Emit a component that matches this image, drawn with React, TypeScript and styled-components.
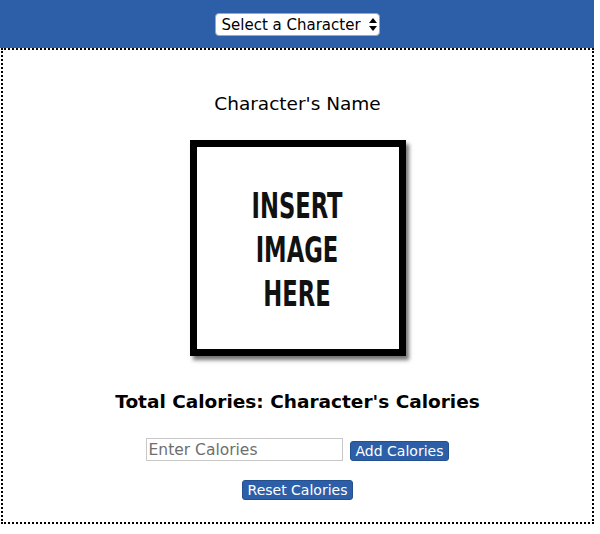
import React from "react";
import styled, { createGlobalStyle } from "styled-components";

const Global = createGlobalStyle`
  html, body { margin: 0; padding: 0; background: #fff; }
  body { font-family: "DejaVu Sans", Verdana, sans-serif; }
`;

const Page = styled.div`
  width: 594px;
`;

const Header = styled.header`
  height: 48px;
  background: #2d5fa9;
  display: flex;
  align-items: center;
  justify-content: center;
`;

const SelectWrap = styled.div`
  position: relative;
  margin-top: 1px;
`;

const Select = styled.select`
  appearance: none;
  -webkit-appearance: none;
  display: block;
  width: 165px;
  height: 23px;
  font-family: "DejaVu Sans", Verdana, sans-serif;
  font-size: 15px;
  color: #000;
  background: #fff;
  border: 1px solid #9aa7bd;
  border-radius: 4px;
  padding: 0 14px 0 6px;
`;

const Arrows = styled.svg`
  position: absolute;
  right: 3px;
  top: 5px;
  pointer-events: none;
`;

const Panel = styled.main`
  margin-left: 1px;
  border: 2px dotted #000;
  height: 472px;
  display: flex;
  flex-direction: column;
  align-items: center;
`;

const Name = styled.h2`
  margin: 42px 0 0;
  font-size: 18.5px;
  font-weight: normal;
  line-height: 24px;
`;

const Frame = styled.div`
  margin-top: 24px;
  width: 202px;
  height: 202px;
  border: 7px solid #000;
  background: #fff;
  box-shadow: 3px 4px 4px rgba(0, 0, 0, 0.55);
  display: flex;
  align-items: center;
  justify-content: center;
`;

const Placeholder = styled.div`
  font-family: "DejaVu Sans Condensed", "DejaVu Sans", sans-serif;
  font-stretch: condensed;
  font-weight: bold;
  font-size: 36px;
  line-height: 44px;
  text-align: center;
  transform: scaleX(0.7);
  margin-top: 4px;
  color: #111;
`;

const Total = styled.h3`
  margin: 34px 0 0;
  font-size: 18.5px;
  font-weight: bold;
  line-height: 24px;
`;

const Row = styled.div`
  margin-top: 24px;
  display: flex;
  align-items: center;
  gap: 7px;
`;

const Input = styled.input`
  width: 191px;
  height: 21px;
  padding: 0 2px;
  border: 1px solid #c8c8c8;
  font-family: "DejaVu Sans", Verdana, sans-serif;
  font-size: 15.5px;
  &::placeholder { color: #6e6e6e; }
`;

const Button = styled.button<{ $top?: number }>`
  margin-top: ${(p) => p.$top ?? 0}px;
  background: #2d5fa9;
  color: #fff;
  border: 1px solid #24508f;
  border-radius: 3px;
  height: 20px;
  padding: 0 5px;
  font-family: "DejaVu Sans", Verdana, sans-serif;
  font-size: 14px;
  line-height: 18px;
`;

export default function App() {
  return (
    <>
      <Global />
      <Page>
        <Header>
          <SelectWrap>
            <Select defaultValue="">
              <option value="">Select a Character</option>
            </Select>
            <Arrows width="8" height="13" viewBox="0 0 8 13">
              <path d="M4 0 L8 5 L0 5 Z" fill="#000" />
              <path d="M0 8 L8 8 L4 13 Z" fill="#000" />
            </Arrows>
          </SelectWrap>
        </Header>
        <Panel>
          <Name>Character's Name</Name>
          <Frame>
            <Placeholder>
              INSERT
              <br />
              IMAGE
              <br />
              HERE
            </Placeholder>
          </Frame>
          <Total>Total Calories: Character's Calories</Total>
          <Row>
            <Input placeholder="Enter Calories" />
            <Button $top={3}>Add Calories</Button>
          </Row>
          <Button $top={19}>Reset Calories</Button>
        </Panel>
      </Page>
    </>
  );
}
